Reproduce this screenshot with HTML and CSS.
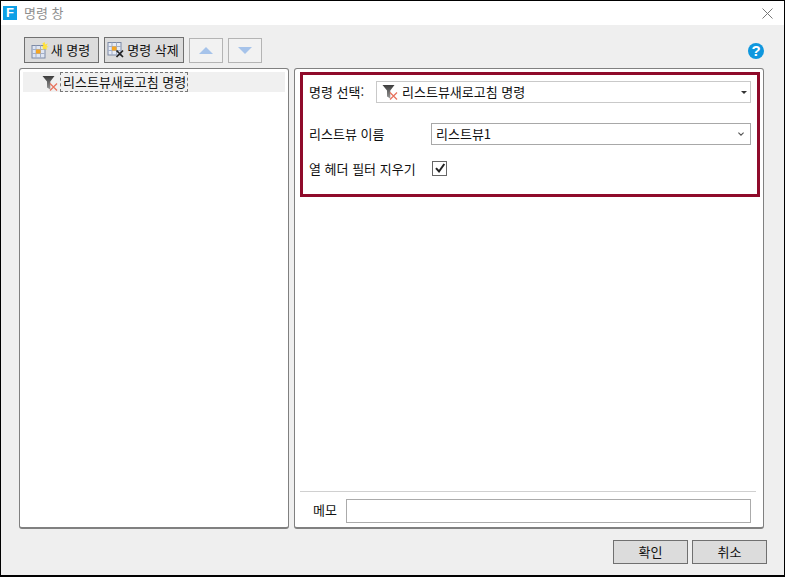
FILE: index.html
```html
<!DOCTYPE html>
<html lang="ko">
<head>
<meta charset="utf-8">
<title>명령 창</title>
<link rel="stylesheet" href="styles.css">
</head>
<body>
<svg class="defs" width="0" height="0" aria-hidden="true">
  <symbol id="filter-x" viewBox="0 0 16 16">
    <defs>
      <linearGradient id="funnel" x1="0" y1="0" x2="0" y2="1">
        <stop offset="0" stop-color="#3c3c3c"/>
        <stop offset="1" stop-color="#9a9a9a"/>
      </linearGradient>
    </defs>
    <path d="M0.5 1H12.5L8.3 6.5V14.5L5 12.5V6.5Z" fill="url(#funnel)"/>
    <path d="M8 8.5L15 15.5M15 8.5L8 15.5" stroke="#e8735e" stroke-width="1.3" fill="none"/>
  </symbol>
</svg>
<div class="window">
  <header class="titlebar">
    <span class="app-icon">F</span>
    <span class="title">명령 창</span>
    <svg class="close" viewBox="0 0 11 11"><path d="M.5.5L10.5 10.5M10.5.5L.5 10.5" stroke="#777" stroke-width="1" fill="none"/></svg>
  </header>
  <main class="content">
    <div class="toolbar">
      <button class="btn tool-btn new-btn">
        <svg class="tool-icon" viewBox="0 0 20 20">
          <rect x="3" y="5.5" width="13" height="12.5" fill="#dfe6f3" stroke="#7d8aa5"/>
          <path d="M3 9.5H16M3 13.5H16M7 5.5V18M11.5 5.5V18" stroke="#a3afc8" fill="none"/>
          <rect x="7" y="9.5" width="4.5" height="4" fill="#f5a623"/>
          <path d="M15.5 2L16.3 4.6L18.8 3.6L17.5 5.9L19.6 7L17.4 7.6L18.2 10L15.8 8.8L13.5 10L14.1 7.6L12 6.8L14.4 5.9L13.4 3.6Z" fill="#ffe23d"/>
        </svg>
        <span>새 명령</span>
      </button>
      <button class="btn tool-btn del-btn">
        <svg class="tool-icon" viewBox="0 0 20 20">
          <rect x="3" y="2.5" width="13" height="12.5" fill="#e6ebf5" stroke="#7d8aa5"/>
          <path d="M3 6.5H16M3 10.5H16M7 2.5V15M11.5 2.5V15" stroke="#a3afc8" fill="none"/>
          <rect x="7" y="6.5" width="4.5" height="4" fill="#f5a623"/>
          <path d="M11.5 10.5L18 17M18 10.5L11.5 17" stroke="#222" stroke-width="1.7" fill="none"/>
        </svg>
        <span>명령 삭제</span>
      </button>
      <button class="btn arrow-btn"><span class="tri-up"></span></button>
      <button class="btn arrow-btn"><span class="tri-down"></span></button>
      <svg class="help" viewBox="0 0 16 16">
        <circle cx="8" cy="8" r="8" fill="#0f97de"/>
        <text x="8" y="13.2" text-anchor="middle" class="help-q">?</text>
      </svg>
    </div>
    <div class="panels">
      <section class="panel left-panel">
        <div class="tree-row">
          <svg class="tree-icon"><use href="#filter-x"/></svg>
          <span class="tree-label">리스트뷰새로고침 명령</span>
        </div>
      </section>
      <section class="panel right-panel">
        <div class="props">
          <div class="row row-cmd">
            <label class="cmd-label">명령 선택:</label>
            <div class="field cmd-field">
              <svg class="field-icon"><use href="#filter-x"/></svg>
              <span class="grow">리스트뷰새로고침 명령</span>
              <span class="caret"></span>
            </div>
          </div>
          <div class="row row-view">
            <label class="opt-label">리스트뷰 이름</label>
            <div class="field view-field">
              <span class="grow">리스트뷰1</span>
              <svg class="chev" viewBox="0 0 6 4"><path d="M.4 .6L3 3.2L5.6 .6" stroke="#555" stroke-width="1.1" fill="none"/></svg>
            </div>
          </div>
          <div class="row row-check">
            <label class="opt-label">열 헤더 필터 지우기</label>
            <span class="checkbox">
              <svg viewBox="0 0 12 12"><path d="M2 6.2L5 9.5L10.3 2" stroke="#222" stroke-width="2" fill="none"/></svg>
            </span>
          </div>
        </div>
        <div class="memo">
          <label class="memo-label">메모</label>
          <div class="memo-input"></div>
        </div>
      </section>
    </div>
    <div class="actions">
      <button class="btn action-btn">확인</button>
      <button class="btn action-btn">취소</button>
    </div>
  </main>
</div>
</body>
</html>
```
FILE: styles.css
```css
* { box-sizing: border-box; }
html, body { margin: 0; padding: 0; background: #000; }
body {
  width: 785px;
  height: 577px;
  overflow: hidden;
  font-family: "Noto Sans CJK KR", "Noto Sans", sans-serif;
  font-size: 13px;
  color: #111;
}
.defs { position: absolute; }
.window {
  width: 785px;
  height: 577px;
  border: 1px solid #000;
  border-bottom-width: 2px;
  display: flex;
  flex-direction: column;
  background: #efefef;
}
.titlebar {
  height: 24px;
  flex: none;
  background: #fff;
  display: flex;
  align-items: center;
  padding: 0 11px 0 2px;
}
.app-icon {
  width: 14px;
  height: 14px;
  background: #0ea0e6;
  color: #fff;
  font: bold 13px/14px "Liberation Sans", sans-serif;
  text-align: center;
}
.title { margin-left: 7px; color: #8e8e8e; line-height: 14px; flex: 1; }
.close { width: 11px; height: 11px; }
.content { flex: 1; display: flex; flex-direction: column; padding: 12px 17px 0 18px; }
.btn {
  font: inherit;
  color: #111;
  background: #dcdcdc;
  border: 1px solid #707070;
  padding: 0;
  margin: 0;
  display: flex;
  align-items: center;
  justify-content: center;
}
.toolbar { display: flex; align-items: center; height: 26px; padding-left: 5px; }
.tool-btn { height: 26px; gap: 2px; padding-right: 4px; padding-bottom: 1px; }
.new-btn { width: 75px; margin-right: 5px; }
.del-btn { width: 80px; margin-right: 5px; }
.tool-icon { width: 20px; height: 20px; flex: none; margin-top: 1px; }
.arrow-btn {
  width: 34px;
  height: 25px;
  margin-right: 5px;
  background: #f2f2f2;
  border-color: #b4b4b4;
}
.tri-up, .tri-down { width: 0; height: 0; border-left: 7px solid transparent; border-right: 7px solid transparent; }
.tri-up { border-bottom: 7px solid #a6c3ea; }
.tri-down { border-top: 7px solid #a6c3ea; }
.help { width: 16px; height: 16px; margin-left: auto; margin-right: 3px; margin-top: 1px; }
.help-q { font: bold 15px "Liberation Sans", sans-serif; fill: #fff; }
.panels { display: flex; gap: 5px; height: 461px; margin-top: 5px; }
.panel {
  background: #fff;
  border: 1px solid #808080;
  border-bottom-width: 2px;
  border-radius: 3px;
}
.left-panel { width: 270px; padding: 3px; }
.right-panel { width: 470px; display: flex; flex-direction: column; padding: 3px 3px 3px 5px; }
.tree-row { height: 20px; background: #f0f0f0; display: flex; align-items: center; padding-left: 19px; }
.tree-icon { width: 16px; height: 16px; flex: none; margin-top: 2px; }
.tree-label {
  margin-left: 2px;
  height: 20px;
  width: 128px;
  line-height: 18px;
  padding-left: 2px;
  border: 1px dashed #777;
  white-space: nowrap;
}
.props {
  width: 460px;
  height: 125px;
  border: 3px solid #8f0a2a;
  display: flex;
  flex-direction: column;
  padding: 6px 6px 0 6px;
}
.row { display: flex; align-items: center; white-space: nowrap; }
.row-cmd { height: 22px; }
.row-view { height: 22px; margin-top: 20px; }
.row-check { height: 16px; margin-top: 15px; }
.cmd-label { width: 67px; padding-bottom: 2px; }
.row-view .opt-label { padding-bottom: 1px; }
.opt-label { width: 122px; }
.field { height: 22px; display: flex; align-items: center; background: #fff; }
.grow { flex: 1; }
.cmd-field { width: 375px; border: 1px solid #c9c9c9; padding: 0 3px 0 5px; gap: 4px; }
.cmd-field .grow { padding-bottom: 2px; }
.view-field { width: 320px; border: 1px solid #a8a8a8; padding: 0 6px 0 4px; }
.view-field .grow { padding-bottom: 1px; }
.field-icon { width: 16px; height: 16px; flex: none; }
.caret { width: 0; height: 0; border-left: 3px solid transparent; border-right: 3px solid transparent; border-top: 3px solid #333; }
.chev { width: 6px; height: 4px; }
.checkbox {
  width: 15px;
  height: 15px;
  margin-left: 1px;
  border: 1px solid #666;
  background: #fff;
  display: flex;
  align-items: center;
  justify-content: center;
}
.checkbox svg { width: 12px; height: 12px; }
.memo {
  margin-top: auto;
  margin-right: 4px;
  height: 33px;
  border-top: 1px solid #d0d0d0;
  padding: 7px 5px 0 13px;
  display: flex;
  align-items: flex-start;
}
.memo-label { width: 33px; line-height: 22px; }
.memo-input { flex: 1; height: 24px; border: 1px solid #ababab; background: #fff; }
.actions { display: flex; justify-content: flex-end; gap: 4px; margin-top: 11px; }
.action-btn { width: 75px; height: 24px; padding-bottom: 1px; }
```
